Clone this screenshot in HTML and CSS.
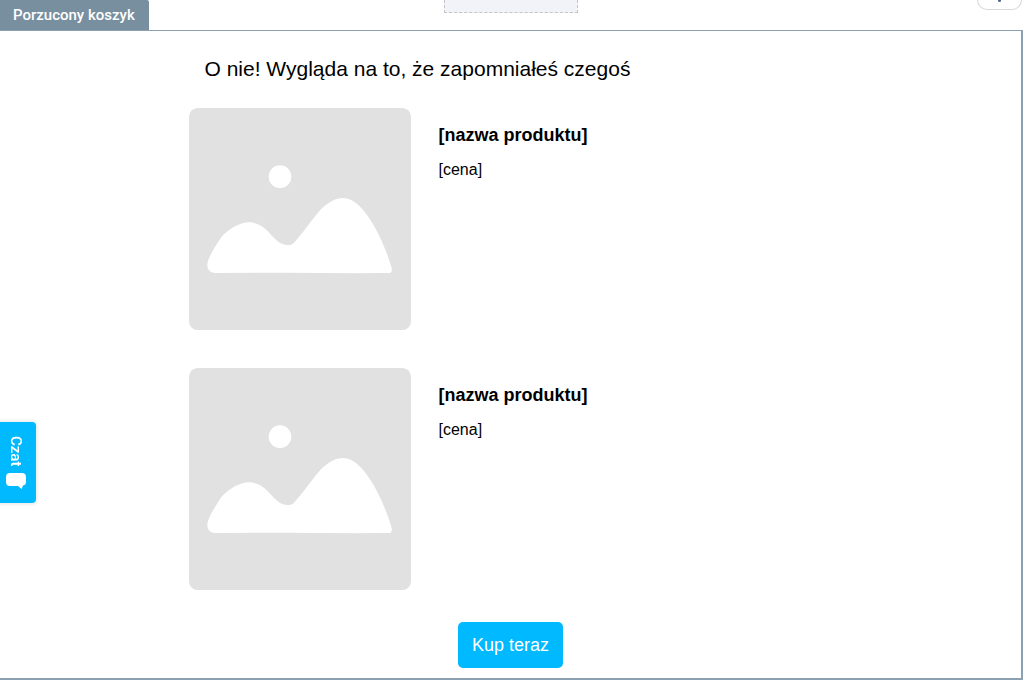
FILE: index.html
```html
<!DOCTYPE html>
<html lang="pl">
<head>
<meta charset="utf-8">
<meta name="viewport" content="width=device-width, initial-scale=1">
<title>Porzucony koszyk</title>
<link rel="stylesheet" href="styles.css">
</head>
<body>
<svg class="defs" aria-hidden="true">
  <symbol id="placeholder" viewBox="0 0 666 666">
    <rect width="666" height="666" rx="26" fill="#e1e1e1"/>
    <circle cx="273" cy="206" r="34" fill="#fff"/>
    <path fill="#fff" d="M78 495C60 495 52 479 56 463C62 440 81 412 97 388C114 365 155 343 178 343C224 343 242 379 262 396C279 411 290 411 303 411C310 411 315 404 322 396C352 363 371 331 396 304C423 278 443 270 463 270C493 270 520 299 543 334C571 377 595 434 608 480C610 489 607 495 598 495C500 496 400 495 300 494Z"/>
  </symbol>
</svg>
<header class="top">
  <span class="tab">Porzucony koszyk</span>
  <div class="dropzone"></div>
  <button class="handle" type="button" aria-label="Przesuń"><span class="handle-dot"></span></button>
</header>
<main class="block">
  <div class="content">
    <h1 class="title">O nie! Wygląda na to, że zapomniałeś czegoś</h1>
    <article class="product">
      <svg class="picture" role="img" aria-label="Zdjęcie produktu"><use href="#placeholder"/></svg>
      <div class="info">
        <h2 class="name">[nazwa produktu]</h2>
        <p class="price">[cena]</p>
      </div>
    </article>
    <article class="product">
      <svg class="picture" role="img" aria-label="Zdjęcie produktu"><use href="#placeholder"/></svg>
      <div class="info">
        <h2 class="name">[nazwa produktu]</h2>
        <p class="price">[cena]</p>
      </div>
    </article>
    <button class="buy" type="button">Kup teraz</button>
  </div>
</main>
<button class="chat" type="button">
  <span class="chat-label">Czat</span>
  <svg class="chat-icon" viewBox="0 0 20 16" aria-hidden="true"><path fill="#fff" d="M4 0H16Q20 0 20 4V9Q20 12 17 12.500L15.500 16L12 13H4Q0 13 0 9V4Q0 0 4 0Z"/></svg>
</button>
</body>
</html>
```
FILE: styles.css
```css
* {
  box-sizing: border-box;
}

body {
  margin: 0;
  background: #fff;
  color: #000;
  font-family: "Liberation Sans", Arial, sans-serif;
  overflow: hidden;
}

h1,
h2,
p {
  margin: 0;
}

.defs {
  display: none;
}

.top {
  display: grid;
  grid-template-columns: 1fr 134px 1fr;
  align-items: start;
  height: 30px;
  padding-right: 2px;
}

.tab {
  justify-self: start;
  height: 30px;
  padding: 0 14px 0 13px;
  border-top-right-radius: 2px;
  background: #788f9f;
  color: #fff;
  font: 500 15px/30px Roboto, sans-serif;
}

.dropzone {
  height: 13px;
  border: 1px dashed #c4c4c4;
  border-top: 0;
  background: #f1f3f9;
}

.handle {
  display: flex;
  justify-content: center;
  justify-self: end;
  width: 45px;
  height: 10px;
  padding: 0;
  border: 1px solid #d8d9dc;
  border-top: 0;
  border-radius: 0 0 14px 14px;
  background: #fff;
}

.handle-dot {
  width: 3px;
  height: 2px;
  border-radius: 0 0 2px 2px;
  background: #50658a;
}

.block {
  margin-right: 1px;
  padding: 23px 16px 10px;
  border: solid #8ba0b0;
  border-width: 1px 2px 2px 0;
}

.content {
  display: flex;
  flex-direction: column;
  max-width: 644px;
  margin: 0 auto;
}

.title {
  padding: 0 16px;
  font-size: 21px;
  font-weight: 400;
  line-height: 30px;
}

.product {
  display: flex;
  gap: 28px;
  margin-top: 24px;
}

.product + .product {
  margin-top: 38px;
}

.picture {
  flex: none;
  width: 222px;
  height: 222px;
}

.info {
  padding-top: 16px;
}

.name {
  font-size: 18px;
  line-height: 22px;
}

.price {
  margin-top: 13px;
  font-size: 16px;
  line-height: 22px;
}

.buy {
  align-self: center;
  margin-top: 32px;
  padding: 12px 14px;
  border: 0;
  border-radius: 5px;
  background: #00b9ff;
  color: #fff;
  font: 18px/22px "Liberation Sans", Arial, sans-serif;
}

.chat {
  position: fixed;
  top: 422px;
  left: 0;
  display: flex;
  flex-direction: column;
  align-items: center;
  gap: 7px;
  padding: 14px 10px 14px 6px;
  border: 0;
  border-radius: 0 4px 4px 0;
  background: #00b9ff;
  box-shadow: 0 0 3px 2px #eee;
  color: #fff;
  font: 500 15px/20px Roboto, sans-serif;
}

.chat-label {
  writing-mode: vertical-rl;
}

.chat-icon {
  width: 20px;
  height: 16px;
}
```
